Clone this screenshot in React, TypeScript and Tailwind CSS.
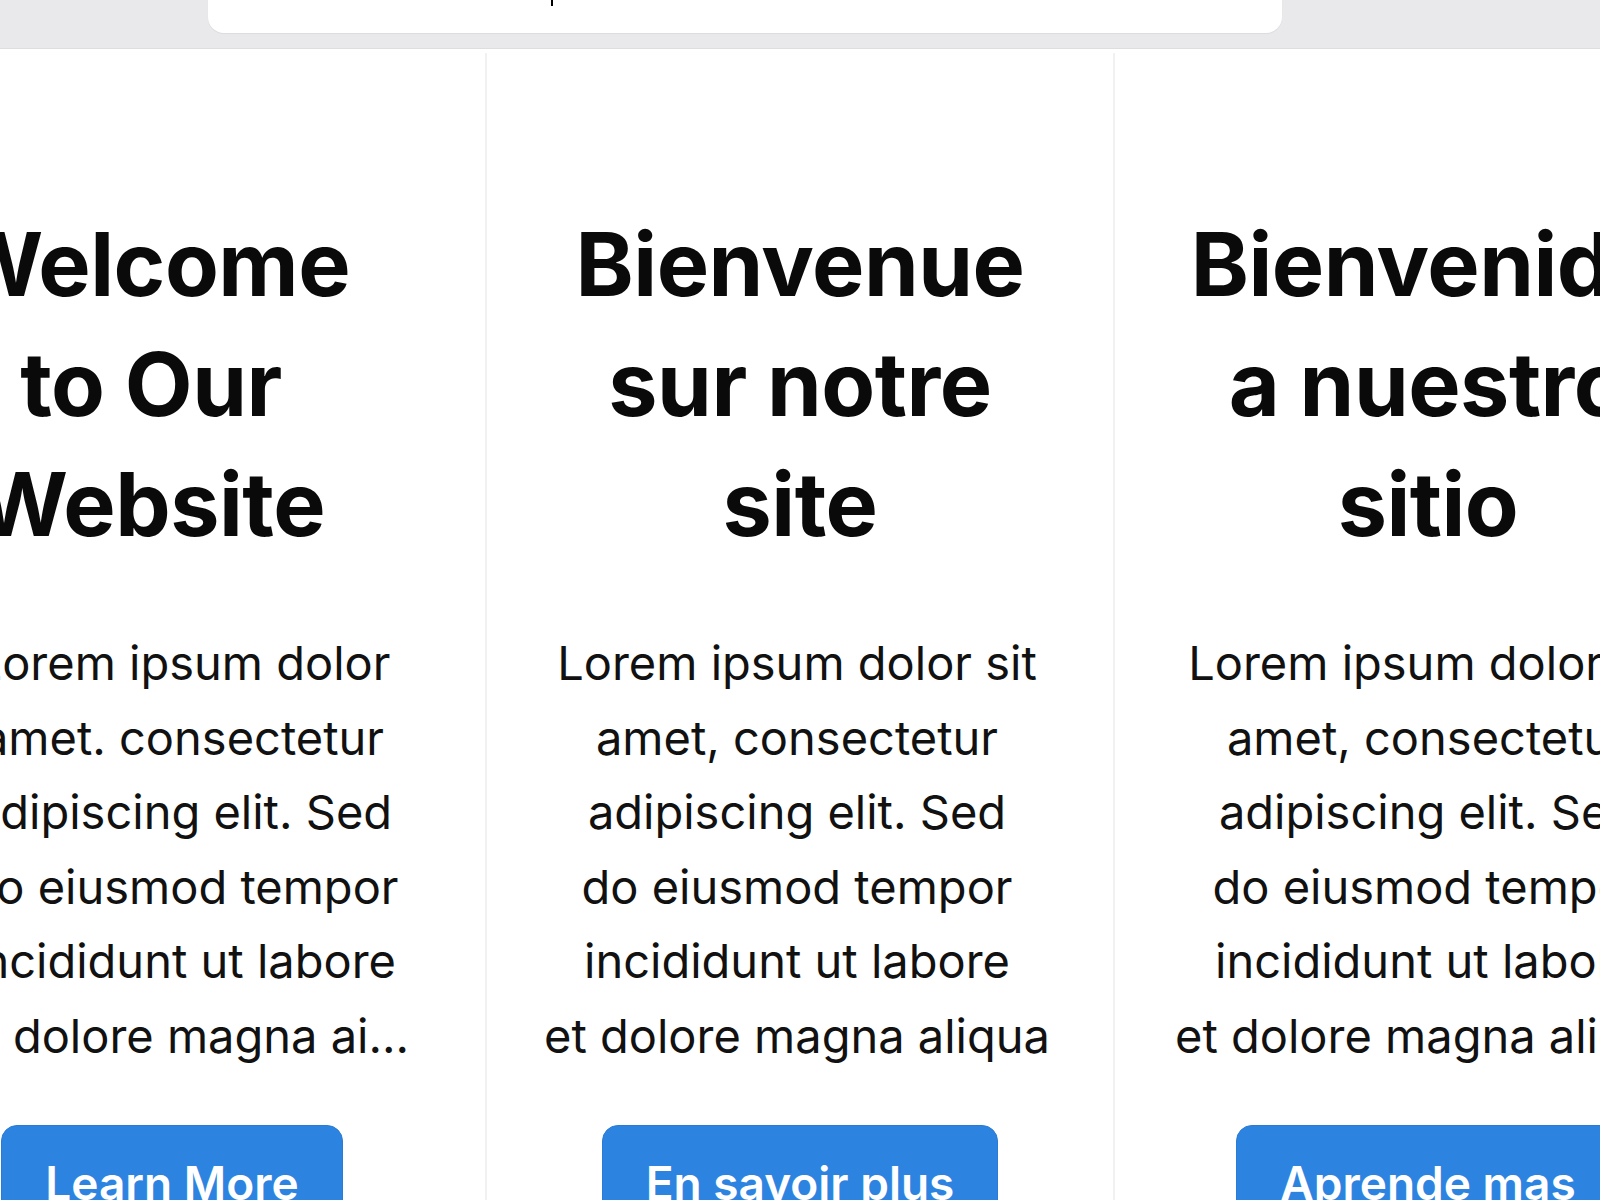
import React from "react";

type Col = {
  title: string[];
  lines: string[];
  button: string;
  titleCls: string;
  textCls: string;
};

const cols: Col[] = [
  {
    title: ["Welcome", "to Our", "Website"],
    lines: [
      "Lorem ipsum dolor",
      "amet. consectetur",
      "adipiscing elit. Sed",
      "do eiusmod tempor",
      "incididunt ut labore",
      "et dolore magna ai...",
    ],
    button: "Learn More",
    titleCls: "pr-[42px]",
    textCls: "pl-[22px]",
  },
  {
    title: ["Bienvenue", "sur notre", "site"],
    lines: [
      "Lorem ipsum dolor sit",
      "amet, consectetur",
      "adipiscing elit. Sed",
      "do eiusmod tempor",
      "incididunt ut labore",
      "et dolore magna aliqua",
    ],
    button: "En savoir plus",
    titleCls: "",
    textCls: "pr-[6px]",
  },
  {
    title: ["Bienvenido", "a nuestro", "sitio"],
    lines: [
      "Lorem ipsum dolor sit",
      "amet, consectetur",
      "adipiscing elit. Sed",
      "do eiusmod tempor",
      "incididunt ut labore",
      "et dolore magna aliqua",
    ],
    button: "Aprende mas",
    titleCls: "",
    textCls: "",
  },
];

export default function App() {
  return (
    <div className="w-[1600px] h-[1200px] overflow-hidden bg-white font-['Inter','Noto_Sans',sans-serif] text-[#0a0a0a]">
      <div className="h-[49px] bg-[#e9e9eb] border-b border-[#dedee0] pl-[208px]">
        <div className="w-[1074px] h-[33px] bg-white rounded-b-[16px] shadow-[0_1px_1px_rgba(0,0,0,0.06)] pl-[343px]">
          <div className="w-[2px] h-[6px] bg-black" />
        </div>
      </div>
      <div className="flex -ml-[143px] pt-[4px]">
        {cols.map((c, i) => (
          <div
            key={i}
            className="w-[628px] shrink-0 border-l-2 border-[#f1f1f1] flex flex-col items-center text-center pt-[151px]"
          >
            <h1 className={`text-[88px] leading-[120px] font-bold tracking-[-0.5px] whitespace-nowrap ${c.titleCls}`}>
              {c.title.map((t, j) => (
                <div key={j}>{t}</div>
              ))}
            </h1>
            <p className={`mt-[62px] text-[47px] leading-[74.5px] text-[#111] whitespace-nowrap ${c.textCls}`}>
              {c.lines.map((t, j) => (
                <span key={j} className="block">
                  {t}
                </span>
              ))}
            </p>
            <button className="mt-[52px] px-[43px] pt-[29px] pb-[29px] bg-[#2d84e0] border border-[#2a7bd6] rounded-[16px] text-white text-[46px] leading-[56px] font-semibold whitespace-nowrap">
              {c.button}
            </button>
          </div>
        ))}
      </div>
    </div>
  );
}
